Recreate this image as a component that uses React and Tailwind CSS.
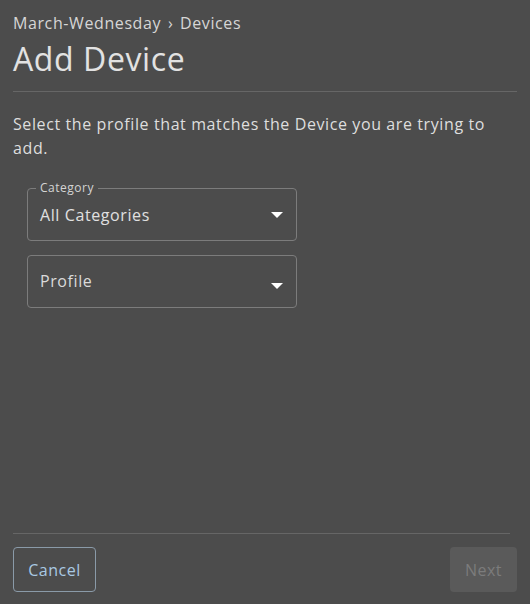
import { useState } from 'react';

function Caret() {
  return (
    <svg width="12" height="6" viewBox="0 0 12 6" className="shrink-0">
      <path d="M0 0h12L6 6z" fill="#ffffff" />
    </svg>
  );
}

export default function App() {
  const [category] = useState('All Categories');

  return (
    <div
      className="w-[530px] h-[604px] bg-[#4c4c4c] text-[#dedede] flex flex-col overflow-hidden"
      style={{ fontFamily: '"Open Sans", sans-serif' }}
    >
      <div className="px-[13px] pt-[12px]">
        <div className="text-[16px] leading-[22px] tracking-[0.6px] text-[#d6d6d6]">
          March-Wednesday <span className="mx-[2px]">›</span> Devices
        </div>
        <h1 className="text-[32px] leading-[40px] font-normal text-[#e2e2e2] mt-[5px] tracking-[0.6px]">Add Device</h1>
        <div className="mt-[12px] border-t border-[#666666]" />
        <p className="mt-[20px] text-[16px] leading-[24px] tracking-[0.6px] text-[#dedede]">
          Select the profile that matches the Device you are trying to add.
        </p>
      </div>

      <div className="px-[27px] mt-[28px] flex flex-col gap-[14px]">
        <div className="relative w-[270px] h-[53px] rounded border border-[#7c7c7c] flex items-center justify-between pl-[12px] pr-[13px]">
          <span className="absolute -top-[9px] left-[8px] px-[4px] bg-[#4c4c4c] text-[12px] leading-[16px] tracking-[0.5px] text-[#d4d4d4]">
            Category
          </span>
          <span className="text-[16px] tracking-[0.6px] text-[#e0e0e0] mt-[1px]">{category}</span>
          <Caret />
        </div>
        <div className="w-[270px] h-[53px] rounded border border-[#7c7c7c] flex justify-between pl-[12px] pr-[13px]">
          <span className="text-[16px] tracking-[0.6px] text-[#dadada] mt-[13px]">Profile</span>
          <div className="mt-[27px]">
            <Caret />
          </div>
        </div>
      </div>

      <div className="flex-1" />

      <div className="px-[13px] pb-[12px]">
        <div className="border-t border-[#666666] mr-[7px]" />
        <div className="mt-[13px] flex justify-between">
          <button className="h-[45px] w-[83px] rounded border border-[#8a9aa8] text-[16px] tracking-[0.5px] text-[#a9c9e3]">
            Cancel
          </button>
          <button className="h-[45px] w-[67px] rounded bg-[#5a5a5a] text-[16px] tracking-[0.5px] text-[#7c7c7c]">
            Next
          </button>
        </div>
      </div>
    </div>
  );
}
